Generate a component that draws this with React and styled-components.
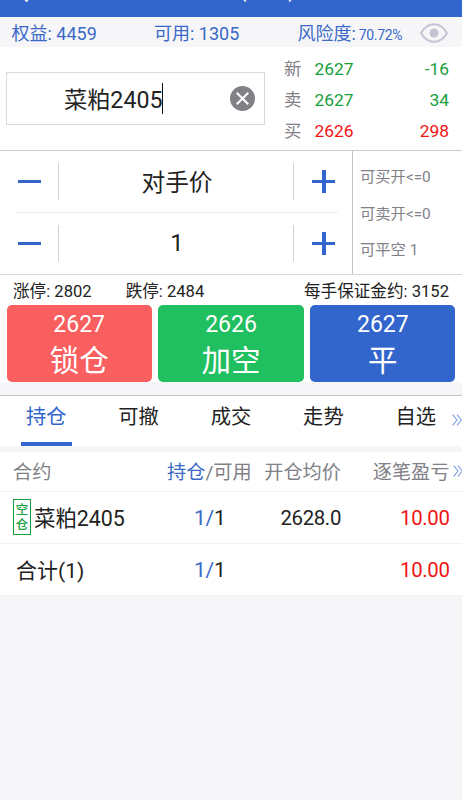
import styled, { createGlobalStyle } from "styled-components";

export default function App() {
    return (
        <>
            <GlobalStyle />
            <Screen>
                <TitleBar>
                    <BackArrow viewBox="0 0 12 20">
                        <path d="M10.500 1.500L2 10l8.500 8.500" />
                    </BackArrow>
                    <Title>
                        <span>(</span>
                        <span>)</span>
                    </Title>
                </TitleBar>

                <Account>
                    <AccountItem $width={142.500}>权益: 4459</AccountItem>
                    <AccountItem $width={143.500}>可用: 1305</AccountItem>
                    <AccountItem>风险度: <small>70.72%</small></AccountItem>
                    <Eye viewBox="0 0 30 22">
                        <path d="M2 11C5.500 5 10 2.200 15 2.200S24.500 5 28 11c-3.500 6-8 8.800-13 8.800S5.500 17 2 11z" />
                        <circle cx="15" cy="11" r="4.500" />
                    </Eye>
                </Account>

                <Instrument>
                    <SearchBox>
                        <SearchText>菜粕2405</SearchText>
                        <Caret />
                        <Clear viewBox="0 0 24 24">
                            <circle cx="12" cy="12" r="12" />
                            <path d="M6.500 6.500l11 11M17.500 6.500l-11 11" />
                        </Clear>
                    </SearchBox>
                    <Quotes>
                        {quotes.map((q) => (
                            <Quote key={q.label} $color={q.color}>
                                <span>{q.label}</span>
                                <b>{q.price}</b>
                                <b>{q.volume}</b>
                            </Quote>
                        ))}
                    </Quotes>
                </Instrument>

                <Order>
                    <Steppers>
                        <Stepper>
                            <Minus />
                            <StepValue>对手价</StepValue>
                            <Plus />
                        </Stepper>
                        <Stepper>
                            <Minus />
                            <StepValue>1</StepValue>
                            <Plus />
                        </Stepper>
                    </Steppers>
                    <Available>
                        <span>可买开&lt;=0</span>
                        <span>可卖开&lt;=0</span>
                        <span>可平空 1</span>
                    </Available>
                </Order>

                <Limits>
                    <span>涨停: 2802</span>
                    <span>跌停: 2484</span>
                    <span>每手保证金约: 3152</span>
                </Limits>

                <Actions>
                    {actions.map((a) => (
                        <Action key={a.label} $color={a.color}>
                            <span>{a.price}</span>
                            <strong>{a.label}</strong>
                        </Action>
                    ))}
                </Actions>

                <Tabs>
                    {tabs.map((tab, i) => (
                        <Tab key={tab} $active={i === 0}>{tab}</Tab>
                    ))}
                    <TabsMore><More /></TabsMore>
                </Tabs>

                <HeadRow>
                    <Cell>合约</Cell>
                    <Cell><Blue>持仓</Blue>/可用</Cell>
                    <Cell $right>开仓均价</Cell>
                    <Cell $right>逐笔盈亏</Cell>
                    <More />
                </HeadRow>
                <Row>
                    <Contract>
                        <Tag><span>空</span><span>仓</span></Tag>
                        <ContractName>菜粕2405</ContractName>
                    </Contract>
                    <Amount><Blue>1/</Blue>1</Amount>
                    <Price $right>2628.0</Price>
                    <Profit $right>10.00</Profit>
                </Row>
                <Row>
                    <Total>合计(1)</Total>
                    <Amount><Blue>1/</Blue>1</Amount>
                    <Cell />
                    <Profit $right>10.00</Profit>
                </Row>
            </Screen>
        </>
    );
}

const quotes = [
    { label: "新", price: "2627", volume: "-16", color: "#16a03c" },
    { label: "卖", price: "2627", volume: "34", color: "#16a03c" },
    { label: "买", price: "2626", volume: "298", color: "#f01414" },
];

const actions = [
    { price: "2627", label: "锁仓", color: "#f95f5f" },
    { price: "2626", label: "加空", color: "#20bf60" },
    { price: "2627", label: "平", color: "#3266cc" },
];

const tabs = ["持仓", "可撤", "成交", "走势", "自选"];

function More() {
    return (
        <MoreIcon viewBox="0 0 10 12">
            <path d="M.7.700L5 6 .7 11.300M5 .700L9.300 6 5 11.300" />
        </MoreIcon>
    );
}

const GlobalStyle = createGlobalStyle`
    * {
        box-sizing: border-box;
    }
    body {
        margin: 0;
        background-color: #f6f6f9;
        font-family: Roboto, "Noto Sans CJK SC", sans-serif;
        color: #222;
    }
`
const Screen = styled.div`
    width: 462px;
    height: 800px;
    overflow: hidden;
    white-space: nowrap;
`
const TitleBar = styled.header`
    height: 17px;
    display: flex;
    align-items: flex-end;
    padding: 0 0 14px 17px;
    overflow: hidden;
    background-color: #3266cc;
    color: #fff;
`
const BackArrow = styled.svg`
    width: 12px;
    height: 20px;
    flex: none;
    fill: none;
    stroke: #fff;
    stroke-width: 2.2;
`
const Title = styled.div`
    width: 57px;
    margin: 0 0 3px 210px;
    display: flex;
    justify-content: space-between;
    font-size: 22px;
    line-height: 20px;
`
const Account = styled.div`
    height: 30px;
    display: flex;
    align-items: center;
    padding: 1px 13px 0 11.5px;
    font-size: 18px;
    color: #3a69c8;
`
const AccountItem = styled.div`
    width: ${(p) => (p.$width ? `${p.$width}px` : "auto")};
    height: 28px;
    line-height: 29px;
    small {
        font-size: 14px;
        letter-spacing: -.35px;
        margin-left: -1.5px;
    }
`
const Eye = styled.svg`
    width: 30px;
    height: 22px;
    margin-left: auto;
    fill: none;
    stroke: #c5c4d3;
    stroke-width: 2;
    circle {
        fill: #c5c4d3;
        stroke: none;
    }
`
const Instrument = styled.section`
    height: 103px;
    display: flex;
    padding: 0 13px 0 6px;
    background-color: #fff;
`
const SearchBox = styled.div`
    width: 258.5px;
    height: 53px;
    margin-top: 25px;
    display: flex;
    align-items: center;
    padding: 0 9px 0 57px;
    border: 1.5px solid #d7dadf;
`
const SearchText = styled.span`
    padding-bottom: 2px;
    font-size: 23.2px;
`
const Caret = styled.i`
    width: 1px;
    height: 31px;
    margin-left: -1px;
    background-color: #111;
`
const Clear = styled.svg`
    width: 25px;
    height: 25px;
    margin-left: auto;
    fill: #818087;
    path {
        stroke: #fff;
        stroke-width: 2;
    }
`
const Quotes = styled.div`
    flex: 1;
    margin: 7px 0 0 19.5px;
`
const Quote = styled.div`
    height: 31px;
    display: grid;
    grid-template-columns: 30.5px 1fr auto;
    align-items: center;
    font-size: 17.4px;
    line-height: 31px;
    color: #818087;
    b {
        font-weight: 400;
        color: ${(p) => p.$color};
    }
`
const Order = styled.section`
    height: 125px;
    display: flex;
    border-top: 1px solid #c9cacd;
    border-bottom: 1px solid #d4d5d8;
    background-color: #fff;
`
const Steppers = styled.div`
    width: 353px;
    padding: 0 14px 0 15px;
    border-right: 1px solid #c4c5c9;
`
const Stepper = styled.div`
    height: 61px;
    display: flex;
    align-items: center;
    justify-content: space-between;
    padding: 0 3px;
    & + & {
        height: 62px;
        border-top: 1px solid #ebecf1;
    }
`
const Minus = styled.button`
    width: 23px;
    height: 3px;
    padding: 0;
    border: 0;
    background-color: #3266cc;
`
const Plus = styled.button`
    width: 23px;
    height: 23px;
    padding: 0;
    border: 0;
    background:
        linear-gradient(#3266cc, #3266cc) center / 23px 3px no-repeat,
        linear-gradient(#3266cc, #3266cc) center / 4px 23px no-repeat;
`
const StepValue = styled.div`
    width: 236px;
    height: 37px;
    margin-left: -1px;
    padding: 0 0 1px 2px;
    display: flex;
    align-items: center;
    justify-content: center;
    border: solid #d2d3d6;
    border-width: 0 1px;
    font-size: 23.7px;
`
const Available = styled.div`
    display: flex;
    flex-direction: column;
    padding: 8px 0 0 7px;
    font-size: 15.3px;
    line-height: 36.5px;
    color: #818087;
`
const Limits = styled.div`
    height: 30px;
    display: flex;
    padding: 0 13px;
    font-size: 16.6px;
    line-height: 33px;
    background-color: #fff;
    span:nth-child(2) {
        margin-left: 34px;
    }
    span:last-child {
        margin-left: auto;
    }
`
const Actions = styled.div`
    height: 77px;
    display: flex;
    gap: 6.5px;
    padding: 0 6.5px;
    background-color: #fff;
`
const Action = styled.button`
    flex: 1;
    display: flex;
    flex-direction: column;
    align-items: center;
    padding: 1px 0 0;
    border: 0;
    border-radius: 5px;
    background-color: ${(p) => p.$color};
    color: #fff;
    font-family: inherit;
    font-size: 23px;
    line-height: 38px;
    strong {
        font-weight: 400;
        font-size: 29.5px;
        line-height: 34px;
    }
`
const Tabs = styled.nav`
    position: relative;
    height: 51px;
    margin: 13px 0 6px;
    display: grid;
    grid-template-columns: repeat(5, 1fr);
    justify-items: center;
    border-top: 1px solid #c4c5c9;
    background-color: #fff;
`
const Tab = styled.div`
    width: 51px;
    display: flex;
    justify-content: center;
    font-size: 20.3px;
    line-height: 43px;
    color: ${(p) => (p.$active ? "#3266cc" : "#222")};
    border-bottom: 4px solid ${(p) => (p.$active ? "#3266cc" : "transparent")};
`
const TabsMore = styled.div`
    position: absolute;
    top: 18px;
    right: 0;
    display: flex;
`
const MoreIcon = styled.svg`
    width: 10px;
    height: 12px;
    fill: none;
    stroke: #7da0e2;
    stroke-width: 1.1;
`
const Row = styled.div`
    height: 52px;
    display: grid;
    grid-template-columns: 154px 90px 84px 108.5px 14px;
    align-items: center;
    padding-left: 13px;
    border-bottom: 1px solid #f0f0f5;
    background-color: #fff;
    font-size: 21px;
`
const HeadRow = styled(Row)`
    height: 40px;
    padding-bottom: 1px;
    font-size: 19.2px;
    color: #818087;
    ${MoreIcon} {
        margin-left: 3px;
    }
`
const Cell = styled.div`
    text-align: ${(p) => (p.$right ? "right" : "left")};
`
const Blue = styled.span`
    color: #3a69c8;
`
const Contract = styled(Cell)`
    display: flex;
    align-items: center;
    gap: 3px;
    font-size: 21.4px;
`
const ContractName = styled.span`
    padding-bottom: 2px;
`
const Tag = styled.div`
    width: 18px;
    height: 36px;
    margin-top: -1px;
    display: flex;
    flex-direction: column;
    align-items: center;
    justify-content: center;
    border: 1px solid #16a03c;
    color: #16a03c;
    font-size: 12.5px;
    font-weight: 500;
    line-height: 15px;
`
const Amount = styled(Cell)`
    padding-left: 27px;
    letter-spacing: -.3px;
`
const Price = styled(Cell)`
    font-size: 20.4px;
    letter-spacing: -.35px;
`
const Profit = styled(Price)`
    color: #f01414;
`
const Total = styled(Cell)`
    padding: 0 0 1px 3px;
`
